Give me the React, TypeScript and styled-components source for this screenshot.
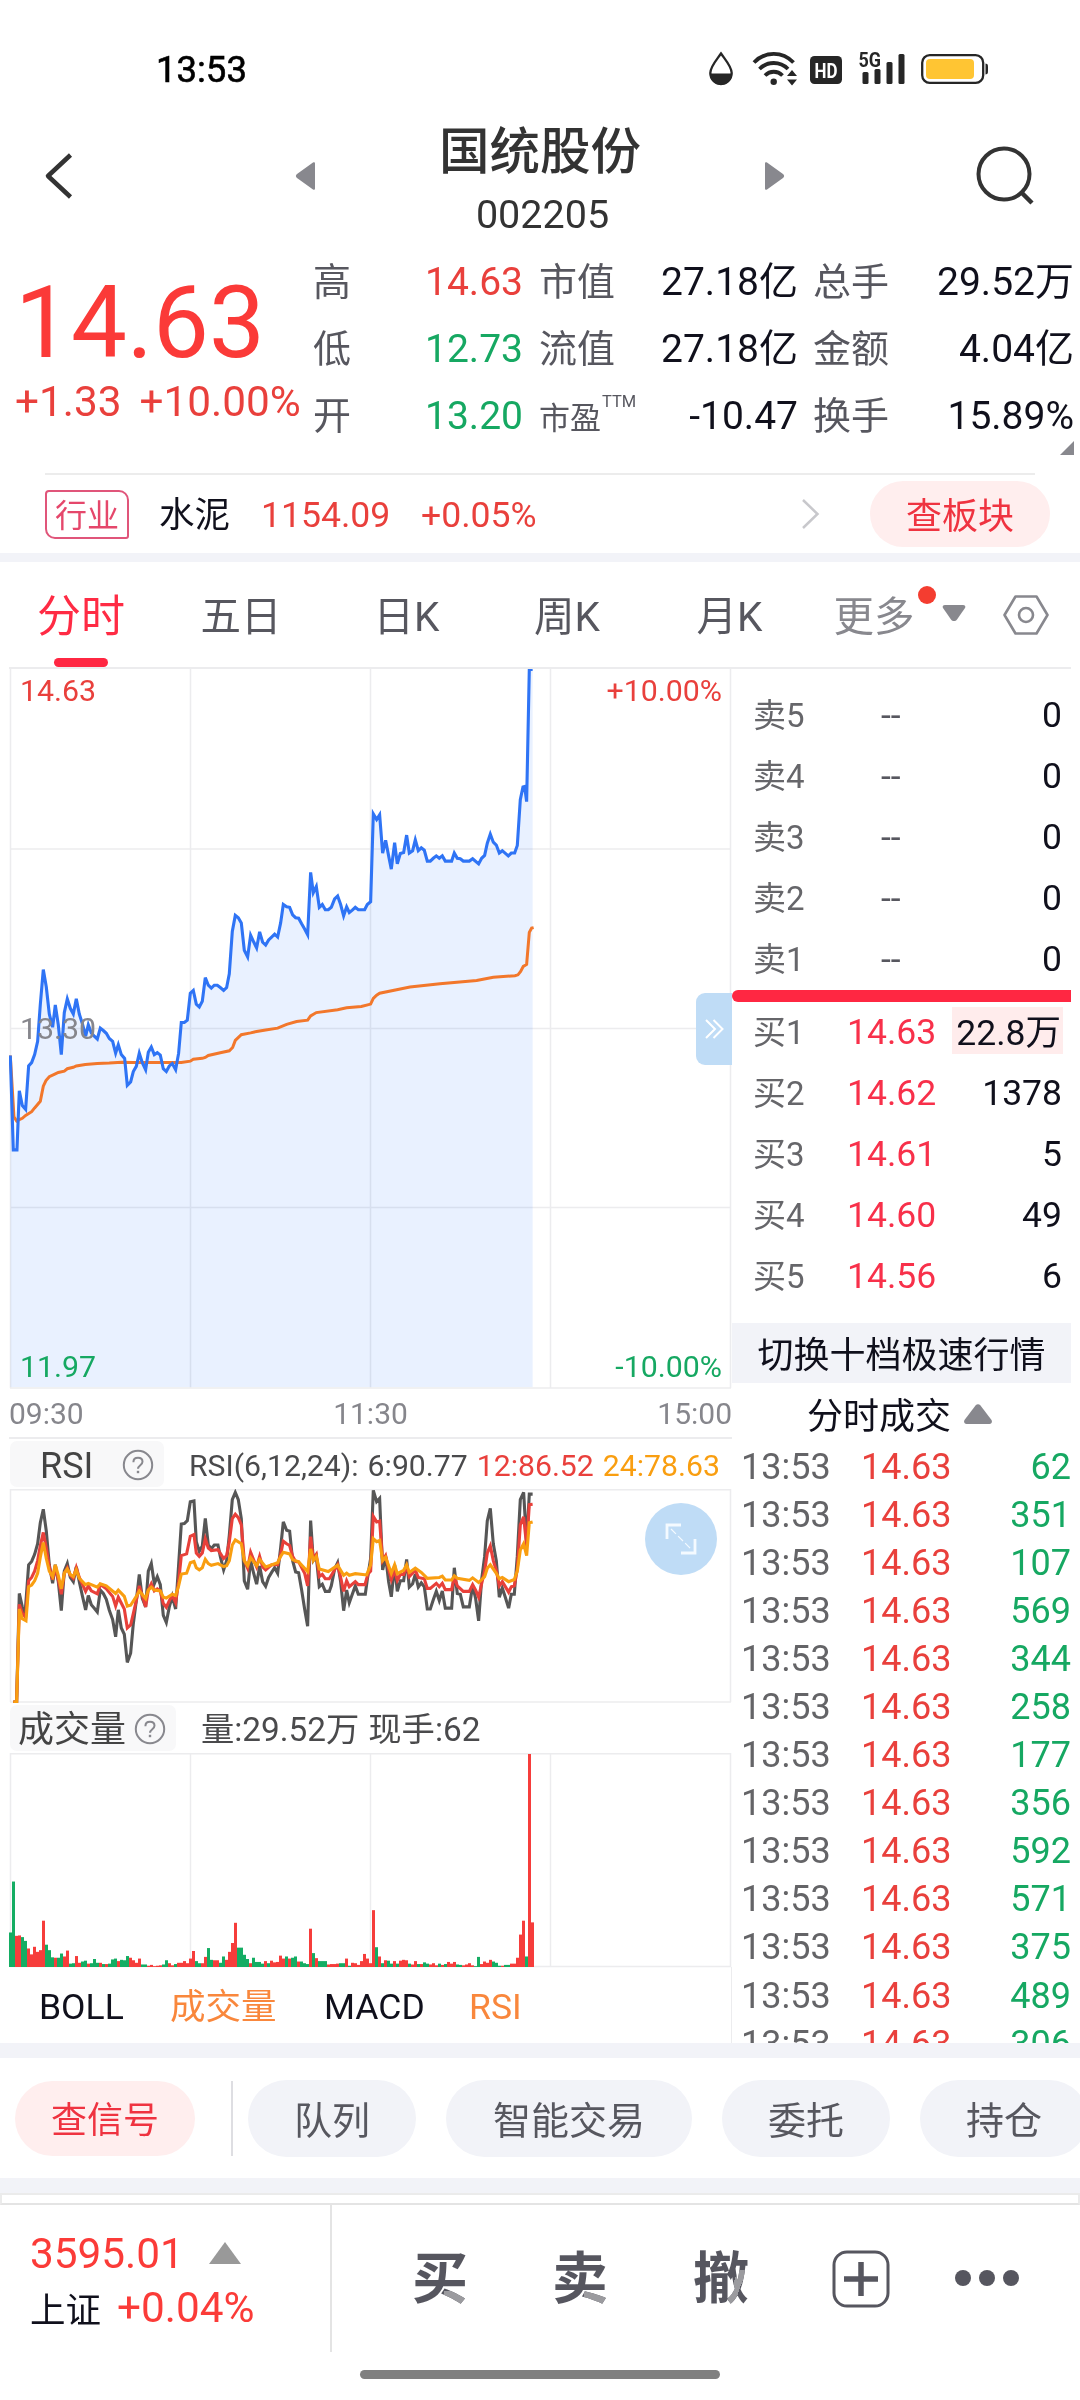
import React from 'react';
import styled, { createGlobalStyle, css } from 'styled-components';

const RED = '#e9403c';
const GREEN = '#16a862';
const INK = '#10101c';
const MUTED = '#57575f';
const GRID = '#ececee';
const BAND = '#f2f3f8';

const GlobalStyle = createGlobalStyle`
  * { box-sizing: border-box; }
  body {
    margin: 0;
    background: #fff;
    font-family: Roboto, 'Noto Sans CJK SC', sans-serif;
  }
  svg { display: block; flex: none; }
`;

const Screen = styled.main`
  width: 1080px;
  height: 2400px;
  overflow: hidden;
  background: #fff;
  color: ${INK};
  display: flex;
  flex-direction: column;
`;

/* ---------- status bar ---------- */

const StatusBar = styled.div`
  height: 100px;
  flex: none;
  display: flex;
  justify-content: space-between;
  padding: 40px 90px 0 156px;
`;

const Clock = styled.div`
  height: 60px;
  font-size: 36.5px;
  line-height: 60px;
  color: #000;
  -webkit-text-stroke: 0.6px #000;
`;

/* ---------- header ---------- */

const Header = styled.header`
  height: 152px;
  flex: none;
  display: grid;
  grid-template-columns: 280px 526px 274px;
`;

const HeaderSide = styled.div<{ $right?: boolean }>`
  display: flex;
  align-items: flex-start;
  justify-content: ${(p) => (p.$right ? 'flex-end' : 'flex-start')};
  padding: ${(p) => (p.$right ? '46px 45px 0 0' : '50px 0 0 42px')};
`;

const Switcher = styled.div`
  display: flex;
  justify-content: space-between;
  padding: 0 21px 0 15px;
`;

const SwitchArrow = styled.svg`
  margin-top: 61px;
`;

const TitleBlock = styled.div`
  display: flex;
  flex-direction: column;
  align-items: center;
`;

const StockName = styled.h1`
  margin: 22px 0 0;
  font-size: 50.5px;
  font-weight: 500;
  line-height: 60px;
  color: #333;
`;

const StockCode = styled.div`
  margin-top: 11px;
  padding-left: 5px;
  font-size: 39.5px;
  line-height: 44px;
  color: #333;
`;

/* ---------- quote ---------- */

const Quote = styled.section`
  height: 221px;
  flex: none;
  display: grid;
  grid-template-columns: 313px 226px 274px 267px;
`;

const PriceBlock = styled.div`
  padding: 19px 0 0 15px;
  color: #fb3a38;
`;

const BigPrice = styled.div`
  font-size: 99.5px;
  line-height: 104px;
  height: 104px;
`;

const Change = styled.div`
  display: flex;
  gap: 18px;
  margin-top: 2px;
  font-size: 42.3px;
  line-height: 50px;
  color: ${RED};
  white-space: nowrap;
`;

const StatColumn = styled.div<{ $end: number }>`
  display: flex;
  flex-direction: column;
  padding-right: ${(p) => p.$end}px;
`;

const Stat = styled.div`
  height: 67px;
  display: flex;
  justify-content: space-between;
  font-size: 39px;
  line-height: 60px;
  white-space: nowrap;
`;

const StatLabel = styled.span<{ $small?: boolean }>`
  display: flex;
  font-size: ${(p) => (p.$small ? 31 : 38)}px;
  line-height: ${(p) => (p.$small ? 65 : 60)}px;
  color: ${MUTED};
`;

const Sup = styled.sup`
  font-size: 16.5px;
  line-height: 16px;
  margin: 8px 0 0 1px;
`;

const StatValue = styled.span<{ $color?: string }>`
  color: ${(p) => p.$color ?? INK};
`;

const Corner = styled.svg`
  align-self: flex-end;
  margin-top: -12px;
`;

/* ---------- industry row ---------- */

const Industry = styled.section`
  height: 80px;
  flex: none;
  margin: 0 30px 0 45px;
  display: flex;
  align-items: center;
  position: relative;
  padding-top: 2px;
  &::before {
    content: '';
    position: absolute;
    top: 0;
    left: 0;
    right: 15px;
    height: 2px;
    background: #ececec;
  }
`;

const IndustryTag = styled.span`
  width: 84px;
  height: 49px;
  margin-top: 1px;
  border: 2px solid #e0557a;
  border-radius: 4px 10px 3px 10px;
  color: #e5476b;
  font-size: 32px;
  line-height: 48px;
  text-align: center;
`;

const IndustryName = styled.span`
  margin-left: 30px;
  width: 102px;
  font-size: 35.5px;
  line-height: 44px;
  padding-top: 2px;
`;

const IndustryFigure = styled.span<{ $width: number }>`
  width: ${(p) => p.$width}px;
  font-size: 35.6px;
  line-height: 44px;
  padding-top: 2px;
  color: ${RED};
`;

const Pill = styled.button<{ $w: number; $h: number; $hot?: boolean; $size?: number }>`
  flex: none;
  width: ${(p) => p.$w}px;
  height: ${(p) => p.$h}px;
  padding: 0;
  border: 0;
  border-radius: 40px;
  font-family: inherit;
  font-size: ${(p) => p.$size ?? 36}px;
  line-height: ${(p) => p.$h}px;
  padding-top: 3px;
  background: ${(p) => (p.$hot ? '#ffeeee' : BAND)};
  color: ${(p) => (p.$hot ? '#ef3340' : MUTED)};
`;

const Band = styled.div<{ $h: number }>`
  flex: none;
  height: ${(p) => p.$h}px;
  background: ${BAND};
`;

/* ---------- period tabs ---------- */

const Tabs = styled.nav`
  height: 105px;
  flex: none;
  display: flex;
  padding-top: 24px;
  position: relative;
`;

const Tab = styled.div<{ $w: number; $active?: boolean; $soft?: boolean }>`
  width: ${(p) => p.$w}px;
  height: 81px;
  flex: none;
  display: flex;
  flex-direction: column;
  align-items: center;
  font-size: 40.5px;
  line-height: 63px;
  white-space: nowrap;
  color: ${(p) => (p.$soft ? '#88888e' : MUTED)};
  ${(p) =>
    p.$active &&
    css`
      color: #ff2b44;
      font-size: 44px;
      &::after {
        content: '';
        width: 54px;
        height: 9px;
        margin-top: 9px;
        border-radius: 5px;
        background: #ff2742;
      }
    `}
`;

const Dot = styled.i`
  position: absolute;
  left: 918px;
  top: 24px;
  width: 18px;
  height: 18px;
  border-radius: 50%;
  background: #f43d30;
`;

/* ---------- main split ---------- */

const Split = styled.section`
  height: 1376px;
  flex: none;
  margin: 0 9px;
  display: grid;
  grid-template-columns: 723px 339px;
  border-top: 2px solid ${GRID};
`;

const ChartColumn = styled.div`
  display: flex;
  flex-direction: column;
  position: relative;
`;

const ChartFrame = styled.div<{ $h: number }>`
  position: relative;
  height: ${(p) => p.$h}px;
  flex: none;
`;

const AxisLabel = styled.span<{ $top: number; $right?: boolean; $color: string }>`
  position: absolute;
  top: ${(p) => p.$top}px;
  ${(p) => (p.$right ? 'right: 10px;' : 'left: 11px;')}
  font-size: 30.3px;
  line-height: 36px;
  color: ${(p) => p.$color};
`;

const TimeAxis = styled.div`
  height: 50px;
  flex: none;
  display: flex;
  justify-content: space-between;
  font-size: 30px;
  line-height: 49px;
  color: #86868c;
  border-bottom: 2px solid ${GRID};
`;

const IndicatorBar = styled.div<{ $h: number }>`
  height: ${(p) => p.$h}px;
  flex: none;
  display: flex;
  align-items: center;
`;

const IndicatorButton = styled.div<{ $w: number; $pad: number; $gap: number }>`
  width: ${(p) => p.$w}px;
  height: 46px;
  flex: none;
  margin-left: 1px;
  padding-left: ${(p) => p.$pad}px;
  display: flex;
  align-items: center;
  gap: ${(p) => p.$gap}px;
  border-radius: 7px;
  background: #f8f8f9;
  font-size: 36px;
  line-height: 42px;
  padding-top: 4px;
  color: #444;
  svg {
    margin-top: -3px;
  }
`;

const Readout = styled.div<{ $left: number; $size: number; $gap: number }>`
  display: flex;
  gap: ${(p) => p.$gap}px;
  margin-left: ${(p) => p.$left}px;
  padding-top: 3px;
  font-size: ${(p) => p.$size}px;
  line-height: 46px;
  color: #4a4a4c;
  white-space: nowrap;
`;

const Tint = styled.span<{ $color: string }>`
  color: ${(p) => p.$color};
`;

const Collapse = styled.div`
  position: absolute;
  right: 0;
  top: 324px;
  width: 36px;
  height: 72px;
  border-radius: 9px 0 0 9px;
  background: #bfdcf6;
  display: flex;
  align-items: center;
  justify-content: center;
`;

const Expand = styled.div`
  position: absolute;
  left: 636px;
  top: 14px;
  width: 72px;
  height: 72px;
  border-radius: 50%;
  background: #bfdcf6;
  display: flex;
  align-items: center;
  justify-content: center;
`;

const IndicatorTabs = styled.div`
  height: 76px;
  flex: none;
  display: flex;
  align-items: center;
  padding: 4px 0 0 30px;
  border-right: 1px solid ${GRID};
`;

const IndicatorTab = styled.span<{ $w: number; $on?: boolean }>`
  width: ${(p) => p.$w}px;
  font-size: 35.5px;
  line-height: 44px;
  color: ${(p) => (p.$on ? '#f9873c' : INK)};
`;

/* ---------- order book and trades ---------- */

const BookColumn = styled.div`
  display: flex;
  flex-direction: column;
  overflow: hidden;
`;

const Level = styled.div`
  height: 61px;
  flex: none;
  display: grid;
  grid-template-columns: 94px 95px 1fr;
  padding: 0 9px 0 21px;
  font-size: 35.5px;
  line-height: 61px;
  white-space: nowrap;
`;

const LevelLabel = styled.span`
  font-size: 33px;
  color: #66666a;
`;

const LevelPrice = styled.span<{ $empty?: boolean }>`
  color: ${(p) => (p.$empty ? MUTED : '#f8304a')};
  padding-left: ${(p) => (p.$empty ? 34 : 0)}px;
`;

const LevelVolume = styled.span<{ $bar?: boolean }>`
  justify-self: end;
  ${(p) =>
    p.$bar &&
    css`
      height: 47px;
      margin: 5px -1px 0 0;
      padding: 0 2px 0 4px;
      line-height: 52px;
      background: #ffecec;
    `}
`;

const Sells = styled.div`
  padding-top: 16px;
  height: 321px;
  flex: none;
`;

const Balance = styled.div`
  height: 12px;
  flex: none;
  border-radius: 6px 0 0 6px;
  background: #ff2742;
`;

const Buys = styled.div`
  height: 321px;
  flex: none;
`;

const DepthSwitch = styled.div`
  height: 60px;
  flex: none;
  background: ${BAND};
  font-size: 36px;
  line-height: 66px;
  text-align: center;
`;

const TradesTitle = styled.div`
  height: 59px;
  flex: none;
  display: flex;
  align-items: center;
  gap: 13px;
  padding: 1px 0 0 75px;
  font-size: 36px;
  svg {
    margin-top: 2px;
  }
`;

const Trade = styled.div`
  height: 48.05px;
  flex: none;
  display: grid;
  grid-template-columns: 120px 120px 1fr;
  padding-left: 9px;
  font-size: 36px;
  line-height: 50px;
  color: #646467;
`;

const TradePrice = styled.span`
  color: ${RED};
`;

const TradeSize = styled.span`
  color: ${GREEN};
  text-align: right;
`;

/* ---------- shortcuts ---------- */

const Shortcuts = styled.section`
  height: 120px;
  flex: none;
  display: flex;
  align-items: center;
  padding-left: 15px;
  overflow: hidden;
`;

const Rule = styled.i<{ $h: number; $left: number; $right: number }>`
  flex: none;
  width: 2px;
  height: ${(p) => p.$h}px;
  margin: 0 ${(p) => p.$right}px 0 ${(p) => p.$left}px;
  background: #dedee2;
`;

const PillRow = styled.div`
  display: flex;
  gap: 30px;
`;

const Drawer = styled.div`
  height: 12px;
  flex: none;
  border: 2px solid #ebebeb;
  border-bottom-color: #e4e4e4;
`;

/* ---------- bottom bar ---------- */

const BottomBar = styled.footer`
  height: 147px;
  flex: none;
  display: flex;
`;

const IndexBox = styled.div`
  width: 332px;
  flex: none;
  border-right: 2px solid #e4e4e4;
  padding: 22px 0 0 30px;
`;

const IndexLine = styled.div<{ $gap: number }>`
  display: flex;
  align-items: center;
  gap: ${(p) => p.$gap}px;
  height: 54px;
  font-size: 42.3px;
  line-height: 54px;
  color: #fb3b38;
  svg {
    margin-top: -3px;
  }
`;

const IndexName = styled.span`
  font-size: 35.5px;
  padding-top: 5px;
  color: ${INK};
`;

const Actions = styled.div`
  flex: 1;
  display: grid;
  grid-template-columns: 217px 140px 142px 138px 111px;
  height: 147px;
`;

const Action = styled.div<{ $left: number }>`
  padding-left: ${(p) => p.$left}px;
  display: flex;
  align-items: center;
`;

const TradeGlyph = styled.span<{ $accent: string }>`
  width: 56px;
  height: 70px;
  font-size: 56px;
  font-weight: 700;
  line-height: 70px;
  color: transparent;
  background: ${(p) => p.$accent}, #56565f;
  background-clip: text;
  -webkit-background-clip: text;
`;

const HomeArea = styled.div`
  flex: 1;
  display: flex;
  justify-content: center;
  padding-top: 18px;
`;

const HomeHandle = styled.i`
  width: 360px;
  height: 9px;
  border-radius: 5px;
  background: #808080;
`;

/* ---------- series: one sample per minute, 9 units apart ---------- */

const PRICE =
  '31,838 40,1038 51,1038 58,913 67,944 77,952 86,860 95,853 104,836 113,808 121,730 130,656 139,693 148,750 158,778 166,731 175,773 184,836 193,747 202,718 211,738 220,750 229,718 238,750 247,770 257,797 265,773 274,790 283,797 292,803 301,780 310,785 319,791 328,802 338,808 347,833 355,815 364,836 374,844 382,901 392,894 400,872 409,861 418,833 427,853 437,868 445,831 454,820 463,836 472,832 481,837 490,866 499,872 508,860 517,855 527,868 536,833 544,768 553,768 562,763 571,706 580,700 589,729 598,735 607,723 616,673 625,689 634,695 643,689 652,689 661,694 671,700 680,694 688,665 697,575 706,541 715,546 724,557 733,615 743,629 752,583 761,597 770,610 779,576 788,598 797,604 806,593 815,587 824,581 833,587 842,557 850,518 860,523 869,524 878,540 887,546 896,547 905,559 914,570 923,582 932,450 940,493 949,480 958,524 967,518 976,529 985,529 994,524 1004,506 1013,500 1022,518 1031,542 1040,523 1048,535 1057,530 1066,524 1075,529 1094,529 1102,518 1112,512 1120,326 1130,338 1139,328 1148,409 1157,382 1166,415 1174,443 1184,387 1192,432 1201,410 1211,408 1220,371 1228,409 1238,404 1246,381 1255,404 1264,398 1273,403 1282,426 1291,426 1300,420 1309,415 1318,420 1327,415 1336,426 1355,426 1363,409 1372,420 1381,421 1390,426 1408,426 1418,421 1436,432 1445,420 1454,414 1462,388 1471,369 1480,386 1489,392 1498,409 1507,404 1525,415 1534,409 1544,409 1552,393 1561,296 1569,269 1574,268 1580,300 1588,20 1598,20';

const AVERAGE =
  '31,838 42,968 50,977 58,974 67,971 77,965 95,957 104,949 121,935 130,903 138,891 148,883 166,877 175,874 193,871 202,866 220,863 229,860 256,857 292,855 328,854 365,852 400,853 544,853 571,850 580,846 607,844 616,842 625,838 661,832 688,828 698,821 706,806 724,794 752,790 770,787 797,784 833,780 860,772 890,766 923,763 932,754 949,747 1013,741 1040,737 1084,734 1112,729 1120,717 1130,710 1139,706 1230,693 1320,686 1430,679 1480,672 1545,669 1554,667 1562,660 1570,649 1580,645 1588,577 1595,568 1601,567';

const RSI6 =
  '40,766 50,766 58,508 67,540 75,560 86,440 95,432 104,415 113,390 121,340 130,308 139,360 148,440 158,484 166,440 175,480 184,549 193,455 202,437 211,470 220,480 229,445 238,480 247,513 257,547 265,513 274,535 283,543 292,552 301,500 310,508 319,522 328,548 338,570 347,611 355,547 364,590 373,605 382,672 392,650 400,580 409,525 418,463 427,520 437,540 445,455 454,437 463,485 472,468 481,487 490,560 499,577 508,540 517,515 527,545 536,440 544,343 553,342 562,335 571,290 582,288 589,385 598,408 607,395 616,330 625,393 634,402 643,393 654,393 661,420 671,452 680,430 688,370 697,285 706,268 715,285 724,330 733,478 743,498 752,430 761,460 770,486 779,443 788,480 797,491 806,470 815,458 824,447 833,460 842,400 850,338 860,358 869,360 878,430 887,457 896,459 905,500 914,545 923,586 932,335 940,430 949,420 958,492 967,486 976,503 988,503 994,490 1004,450 1013,435 1022,480 1031,549 1040,500 1048,530 1057,510 1066,490 1075,510 1096,510 1102,475 1112,425 1120,263 1130,290 1139,282 1148,452 1157,420 1166,480 1174,516 1184,440 1192,503 1201,478 1211,478 1220,427 1228,493 1238,485 1246,462 1255,493 1264,483 1273,492 1282,545 1291,545 1300,523 1309,503 1318,525 1327,502 1336,543 1355,543 1363,447 1372,508 1381,510 1390,540 1408,540 1418,490 1427,520 1436,573 1445,475 1454,420 1462,335 1471,306 1480,390 1489,430 1498,517 1507,495 1516,517 1526,543 1534,510 1543,510 1552,420 1561,285 1571,268 1580,390 1588,272 1598,272';

const RSI12 =
  '40,766 50,766 58,534 67,555 77,565 86,478 95,470 104,455 113,430 121,395 130,363 139,400 148,445 158,475 166,445 175,475 184,510 193,460 202,447 211,465 220,472 229,447 238,470 257,503 265,490 274,502 292,509 301,487 319,497 338,515 347,538 355,517 373,545 382,590 392,583 400,556 409,525 418,490 437,540 445,500 454,485 463,502 472,497 481,502 490,532 499,541 508,525 517,513 527,530 536,480 544,418 560,414 571,372 582,368 589,412 598,420 607,412 616,378 625,400 634,406 654,404 671,425 680,418 688,385 697,330 706,320 715,328 724,345 733,430 743,448 752,410 761,428 770,445 779,420 788,445 797,452 815,440 833,440 842,415 850,384 860,390 869,394 878,420 887,432 896,433 914,460 923,490 932,373 940,425 949,415 958,468 967,463 976,473 988,473 1013,440 1022,470 1031,503 1040,478 1048,492 1066,480 1075,487 1095,487 1104,462 1112,455 1120,325 1130,338 1139,336 1148,430 1157,418 1166,450 1174,475 1184,452 1192,477 1201,463 1211,463 1220,443 1228,468 1246,453 1255,470 1273,473 1282,496 1291,496 1309,484 1318,492 1327,484 1336,499 1355,499 1363,467 1372,490 1390,503 1408,503 1418,487 1427,500 1436,517 1445,485 1454,455 1462,412 1471,395 1480,430 1489,453 1498,490 1507,480 1526,505 1534,492 1543,490 1552,450 1561,345 1571,326 1580,395 1588,297 1598,296';

const RSI24 =
  '40,766 50,766 58,545 67,568 78,573 86,492 95,488 104,478 113,460 121,422 130,387 139,425 148,455 158,468 166,440 175,465 184,497 193,460 202,450 211,463 220,468 229,452 238,472 256,487 265,484 292,493 301,485 319,490 347,508 355,500 373,515 382,538 392,536 409,515 418,502 437,520 445,500 454,493 463,500 481,502 490,517 499,519 517,510 527,513 536,490 544,462 560,460 571,435 582,432 589,447 598,452 607,447 616,427 625,437 634,441 654,437 671,444 680,442 688,430 697,393 706,381 724,390 733,430 743,442 752,423 770,442 779,427 797,445 833,435 842,420 850,410 869,414 878,428 896,433 923,456 932,402 940,430 949,420 958,450 985,456 1013,441 1031,465 1040,460 1048,465 1066,461 1100,464 1112,440 1120,378 1130,385 1139,382 1148,430 1157,422 1174,460 1184,440 1192,461 1211,453 1220,440 1228,458 1246,448 1264,458 1282,472 1318,470 1327,467 1336,476 1355,476 1363,466 1372,472 1408,477 1418,471 1436,482 1445,475 1454,468 1462,448 1471,440 1489,460 1498,473 1507,470 1526,480 1543,475 1552,455 1561,405 1571,390 1580,418 1588,340 1598,338';

const VOLUME =
  '82g 203g 74r 75r 71g 62g 44r 30r 48r 36r 40r 110r 53g 40g 23g 22r 22g 32g 25r 39r 8g 9g 26r 10r 13g 15g 8r 9g 19g 10g 10r 7g 7r 8g 18g 20g 14r 17g 16g 26g 22r 16r 10r 20r 6g 6g 3r 5r 2r 3r 4r 6g 16g 9r 4r 7g 10r 10r 14r 9r 20r 38r 14g 9g 9r 24r 45g 17g 16r 16r 10g 25g 17r 36r 57r 105r 46g 46g 29g 19g 9r 22g 12g 12g 8g 14r 9g 15r 11r 12r 27r 20r 25g 20r 22g 25g 13r 13g 9g 7g 91r 33g 21r 14g 14g 14g 6r 7r 7r 8r 9g 9g 20r 3g 10r 9r 5r 14r 31r 20r 9r 135r 47g 25r 9g 16r 15g 8g 14r 8g 15r 17r 16r 8g 6r 14r 7g 7r 11g 8g 6r 9r 4r 8g 5r 7g 12r 8r 12r 6g 5g 4r 6r 9r 4r 2g 24g 7r 13r 10r 17r 13g 10g 3g 3r 5g 5g 8r 8r 22r 77r 110r 25g 506r 106r'
    .split(' ')
    .map((v) => ({ size: parseInt(v, 10), up: v.endsWith('r') }));

const Line = ({ points, color, width = 2.6 }: { points: string; color: string; width?: number }) => (
  <polyline
    points={points}
    fill="none"
    stroke={color}
    strokeWidth={width}
    strokeLinejoin="miter"
    vectorEffect="non-scaling-stroke"
  />
);

const Grid = ({ h, rows = [], cols = [] }: { h: number; rows?: number[]; cols?: number[] }) => (
  <g stroke={GRID} strokeWidth={1.5} fill="none">
    <path d={`M1.5 0V${h}M721.5 0V${h}`} />
    {cols.map((x) => (
      <path key={x} d={`M${x} 0V${h}`} />
    ))}
    {rows.map((y) => (
      <path key={y} d={`M1 ${y}H722`} />
    ))}
  </g>
);

const PriceChart = () => (
  <svg width={723} height={720}>
    <svg x={1.3} y={0} width={720} height={718.3} viewBox="31 19 2160 1522" preserveAspectRatio="none">
      <polygon points={`31,1541 ${PRICE} 1598,1541`} fill="#e9f1ff" />
    </svg>
    <g style={{ mixBlendMode: 'multiply' }}>
      <Grid h={719} rows={[180, 359.5, 538.5, 719]} cols={[181.5, 361.5, 541.5]} />
    </g>
    <svg x={1.3} y={0} width={720} height={718.3} viewBox="31 19 2160 1522" preserveAspectRatio="none" overflow="visible">
      <Line points={AVERAGE} color="#f2772b" width={3} />
      <Line points={PRICE} color="#2f74f5" width={3.1} />
    </svg>
  </svg>
);

const RsiChart = () => (
  <svg width={723} height={214}>
    <Grid h={213} rows={[0.8, 213]} />
    <svg x={1.3} y={0.5} width={720} height={212.5} viewBox="31 261 2160 505" preserveAspectRatio="none" overflow="visible">
      <Line points={RSI6} color="#565656" width={3.1} />
      <Line points={RSI12} color="#e8403a" width={3.1} />
      <Line points={RSI24} color="#f99e10" width={3.1} />
    </svg>
  </svg>
);

const VolumeChart = () => (
  <svg width={723} height={215}>
    <Grid h={214} rows={[0.8, 213.5]} cols={[181.5, 361.5, 541.5]} />
    {VOLUME.map((v, i) => {
      const h = (v.size * 213) / 506;
      return (
        <rect key={i} x={i * 3} y={214 - h} width={3} height={h} fill={v.up ? '#f63d3b' : '#14ad63'} />
      );
    })}
  </svg>
);

const Help = () => (
  <svg width="32" height="32" viewBox="0 0 32 32" fill="none" stroke="#88888e" strokeWidth="2">
    <circle cx="16" cy="16" r="14.2" />
    <path d="M11.4 13.2c0-2.8 2-4.4 4.6-4.4s4.5 1.5 4.5 4c0 3.300-4.500 3.500-4.500 7" />
    <path d="M16 21.800v2.400" strokeWidth="2.400" />
  </svg>
);

const StatusIcons = () => (
  <svg width="300" height="60" viewBox="690 40 300 60" fill="#262626">
    <path d="M721 53.500c4 6 10.700 13 10.700 19.500a10.700 11 0 0 1-21.400 0c0-6.500 6.700-13.500 10.700-19.500z" fill="none" stroke="#262626" strokeWidth="2.300" />
    <path d="M710 73.500h22c0 7-5 11.500-11 11.500s-11-4.500-11-11.500z" />
    <g fill="none" stroke="#262626" strokeWidth="3.800">
      <path d="M754 62.500c11-11.500 28.500-11.500 39.500 0" />
      <path d="M759.500 69c8-8 20.500-8 28.500 0" />
      <path d="M765 75.500c5-5 12.500-5 17.500 0" />
    </g>
    <circle cx="773.700" cy="81.800" r="3.200" />
    <path d="M787 76l5-6 5 6zM787 79.500l5 6 5-6z" />
    <rect x="810" y="56" width="32" height="28" rx="4.500" />
    <text x="826" y="77.500" textAnchor="middle" fontFamily="Roboto" fontWeight="700" fontSize="21" fill="#fff" textLength="23" lengthAdjust="spacingAndGlyphs">HD</text>
    <text x="858.500" y="67" fontFamily="Roboto" fontWeight="700" fontSize="20.500" textLength="22.500" lengthAdjust="spacingAndGlyphs">5G</text>
    <rect x="862.500" y="72" width="6" height="12" rx="1.500" />
    <rect x="874.500" y="69" width="6" height="15" rx="1.500" />
    <rect x="886.500" y="62" width="6" height="22" rx="1.500" />
    <rect x="898.500" y="54" width="6" height="30" rx="1.500" />
    <rect x="922.200" y="55.200" width="61" height="27.600" rx="7.500" fill="none" stroke="#262626" strokeWidth="2.300" />
    <rect x="926" y="59" width="48" height="20" rx="4" fill="#ffc533" />
    <path d="M985.500 63.500c2.500.3 2.500 1.500 2.500 5.500s0 5.200-2.500 5.500z" />
  </svg>
);

type StatItem = { label: string; value: string; color?: string; ttm?: boolean };

const STATS: { end: number; items: StatItem[] }[] = [
  {
    end: 16,
    items: [
      { label: '高', value: '14.63', color: RED },
      { label: '低', value: '12.73', color: GREEN },
      { label: '开', value: '13.20', color: GREEN },
    ],
  },
  {
    end: 15,
    items: [
      { label: '市值', value: '27.18亿' },
      { label: '流值', value: '27.18亿' },
      { label: '市盈', value: '-10.47', ttm: true },
    ],
  },
  {
    end: 6,
    items: [
      { label: '总手', value: '29.52万' },
      { label: '金额', value: '4.04亿' },
      { label: '换手', value: '15.89%' },
    ],
  },
];

const SELLS = ['卖5', '卖4', '卖3', '卖2', '卖1'];
const BUYS: [string, string, string][] = [
  ['买1', '14.63', '22.8万'],
  ['买2', '14.62', '1378'],
  ['买3', '14.61', '5'],
  ['买4', '14.60', '49'],
  ['买5', '14.56', '6'],
];
const TRADES = [62, 351, 107, 569, 344, 258, 177, 356, 592, 571, 375, 489, 306];
const SHORTCUTS: [string, number][] = [
  ['队列', 168],
  ['智能交易', 246],
  ['委托', 168],
  ['持仓', 168],
];

const ACCENT_FOOT = 'linear-gradient(#9b9b9f, #9b9b9f) 32px 47px / 24px 23px no-repeat';
const ACCENT_SLASH =
  'linear-gradient(110deg, transparent 38%, #9b9b9f 38%, #9b9b9f 62%, transparent 62%) 32px 26px / 20px 40px no-repeat';

export default function App() {
  return (
    <>
      <GlobalStyle />
      <Screen>
        <StatusBar>
          <Clock>13:53</Clock>
          <StatusIcons />
        </StatusBar>

        <Header>
          <HeaderSide>
            <svg width="34" height="52" viewBox="0 0 34 52" fill="none" stroke="#333" strokeWidth="4.500">
              <path d="M28.500 5L6 26l22.500 21" strokeLinejoin="round" />
            </svg>
          </HeaderSide>
          <Switcher>
            <SwitchArrow width="20" height="30" viewBox="0 0 20 30" fill="#88888e">
              <path d="M18 1.500c1-.7 2-.3 2 1v25c0 1.300-1 1.700-2 1L2 17c-1.500-1-1.500-3 0-4z" />
            </SwitchArrow>
            <TitleBlock>
              <StockName>国统股份</StockName>
              <StockCode>002205</StockCode>
            </TitleBlock>
            <SwitchArrow width="20" height="30" viewBox="0 0 20 30" fill="#88888e">
              <path d="M2 1.500c-1-.7-2-.3-2 1v25c0 1.300 1 1.700 2 1L18 17c1.500-1 1.500-3 0-4z" />
            </SwitchArrow>
          </Switcher>
          <HeaderSide $right>
            <svg width="60" height="60" viewBox="0 0 60 60" fill="none" stroke="#333" strokeWidth="4">
              <circle cx="29" cy="28" r="25.500" />
              <path d="M46 46l11 11" strokeWidth="4.500" />
            </svg>
          </HeaderSide>
        </Header>

        <Quote>
          <PriceBlock>
            <BigPrice>14.63</BigPrice>
            <Change>
              <span>+1.33</span>
              <span>+10.00%</span>
            </Change>
          </PriceBlock>
          {STATS.map((col, i) => (
            <StatColumn key={i} $end={col.end}>
              {col.items.map((s) => (
                <Stat key={s.label}>
                  <StatLabel $small={s.ttm}>
                    {s.label}
                    {s.ttm && <Sup>TTM</Sup>}
                  </StatLabel>
                  <StatValue $color={s.color}>{s.value}</StatValue>
                </Stat>
              ))}
              {i === 2 && (
                <Corner width="14" height="14">
                  <path d="M14 0v14H0z" fill="#88888e" />
                </Corner>
              )}
            </StatColumn>
          ))}
        </Quote>

        <Industry>
          <IndustryTag>行业</IndustryTag>
          <IndustryName>水泥</IndustryName>
          <IndustryFigure $width={160}>1154.09</IndustryFigure>
          <IndustryFigure $width={380}>+0.05%</IndustryFigure>
          <svg width="20" height="32" viewBox="0 0 20 32" fill="none" stroke="#c8c8cc" strokeWidth="2.500">
            <path d="M2 2l14.500 14L2 30" />
          </svg>
          <div style={{ flex: 1 }} />
          <Pill $w={180} $h={66} $hot>
            查板块
          </Pill>
        </Industry>
        <Band $h={9} />

        <Tabs>
          <Tab $w={162} $active>
            分时
          </Tab>
          <Tab $w={158}>五日</Tab>
          <Tab $w={173}>日K</Tab>
          <Tab $w={148}>周K</Tab>
          <Tab $w={177}>月K</Tab>
          <Tab $w={112} $soft>
            更多
          </Tab>
          <Dot />
          <svg width="150" height="60" viewBox="930 586 150 60">
            <path d="M945 605h18c2 0 3 1.500 2 3l-8 11.500c-1.500 2-4.500 2-6 0L943 608c-1-1.500 0-3 2-3z" fill="#88888e" />
            <g fill="none" stroke="#88888e" strokeWidth="2.600">
              <path d="M1015.500 596.500h21l11 18.500-11 18.500h-21l-11-18.500z" strokeLinejoin="round" />
              <circle cx="1026" cy="615" r="7" />
            </g>
          </svg>
        </Tabs>

        <Split>
          <ChartColumn>
            <ChartFrame $h={720}>
              <PriceChart />
              <AxisLabel $top={4} $color={RED}>14.63</AxisLabel>
              <AxisLabel $top={4} $right $color={RED}>+10.00%</AxisLabel>
              <AxisLabel $top={342} $color="#86868c">13.30</AxisLabel>
              <AxisLabel $top={680} $color={GREEN}>11.97</AxisLabel>
              <AxisLabel $top={680} $right $color={GREEN}>-10.00%</AxisLabel>
              <Collapse>
                <svg width="20" height="22" viewBox="0 0 20 22" fill="none" stroke="#fff" strokeWidth="2">
                  <path d="M2 2l9 9-9 9M9.500 2l9 9-9 9" />
                </svg>
              </Collapse>
            </ChartFrame>
            <TimeAxis>
              <span>09:30</span>
              <span>11:30</span>
              <span>15:00</span>
            </TimeAxis>
            <IndicatorBar $h={50}>
              <IndicatorButton $w={154} $pad={30} $gap={29}>
                RSI
                <Help />
              </IndicatorButton>
              <Readout $left={25} $size={30.2} $gap={9}>
                <span>RSI(6,12,24):</span>
                <span>6:90.77</span>
                <Tint $color={RED}>12:86.52</Tint>
                <Tint $color="#f99e10">24:78.63</Tint>
              </Readout>
            </IndicatorBar>
            <ChartFrame $h={214}>
              <RsiChart />
              <Expand>
                <svg width="36" height="36" viewBox="0 0 36 36" fill="none" stroke="#f4faff" strokeWidth="2.800">
                  <path d="M18 4H4v14M32 18v14H18" />
                  <path d="M8 8l20 20" strokeWidth="1.200" strokeDasharray="7 3" />
                </svg>
              </Expand>
            </ChartFrame>
            <IndicatorBar $h={50}>
              <IndicatorButton $w={166} $pad={8} $gap={8}>
                成交量
                <Help />
              </IndicatorButton>
              <Readout $left={25} $size={33.3} $gap={9}>
                <span>量:29.52万</span>
                <span>现手:62</span>
              </Readout>
            </IndicatorBar>
            <ChartFrame $h={214}>
              <VolumeChart />
            </ChartFrame>
            <IndicatorTabs>
              <IndicatorTab $w={131}>BOLL</IndicatorTab>
              <IndicatorTab $w={154} $on>
                成交量
              </IndicatorTab>
              <IndicatorTab $w={145}>MACD</IndicatorTab>
              <IndicatorTab $w={100} $on>
                RSI
              </IndicatorTab>
            </IndicatorTabs>
          </ChartColumn>

          <BookColumn>
            <Sells>
              {SELLS.map((label) => (
                <Level key={label}>
                  <LevelLabel>{label}</LevelLabel>
                  <LevelPrice $empty>--</LevelPrice>
                  <LevelVolume>0</LevelVolume>
                </Level>
              ))}
            </Sells>
            <Balance />
            <Buys>
              {BUYS.map(([label, price, volume], i) => (
                <Level key={label}>
                  <LevelLabel>{label}</LevelLabel>
                  <LevelPrice>{price}</LevelPrice>
                  <LevelVolume $bar={i === 0}>{volume}</LevelVolume>
                </Level>
              ))}
            </Buys>
            <DepthSwitch>切换十档极速行情</DepthSwitch>
            <TradesTitle>
              分时成交
              <svg width="28" height="20" viewBox="0 0 28 20" fill="#88888e">
                <path d="M11.500 1.500c1.500-1.800 3.500-1.800 5 0L27.500 16c1 2 0 4-2 4h-23c-2 0-3-2-2-4z" />
              </svg>
            </TradesTitle>
            {TRADES.map((size) => (
              <Trade key={size}>
                <span>13:53</span>
                <TradePrice>14.63</TradePrice>
                <TradeSize>{size}</TradeSize>
              </Trade>
            ))}
          </BookColumn>
        </Split>

        <Band $h={15} />
        <Shortcuts>
          <Pill $w={180} $h={75} $hot>
            查信号
          </Pill>
          <Rule $h={75} $left={36} $right={15} />
          <PillRow>
            {SHORTCUTS.map(([label, w]) => (
              <Pill key={label} $w={w} $h={77} $size={38}>
                {label}
              </Pill>
            ))}
          </PillRow>
        </Shortcuts>
        <Band $h={15} />
        <Drawer />

        <BottomBar>
          <IndexBox>
            <IndexLine $gap={25}>
              3595.01
              <svg width="32" height="22" viewBox="0 0 32 22" fill="#999">
                <path d="M16 0l16 22H0z" />
              </svg>
            </IndexLine>
            <IndexLine $gap={16}>
              <IndexName>上证</IndexName>
              +0.04%
            </IndexLine>
          </IndexBox>
          <Actions>
            <Action $left={80}>
              <TradeGlyph $accent={ACCENT_FOOT}>买</TradeGlyph>
            </Action>
            <Action $left={3}>
              <TradeGlyph $accent={ACCENT_FOOT}>卖</TradeGlyph>
            </Action>
            <Action $left={4}>
              <TradeGlyph $accent={ACCENT_SLASH}>撤</TradeGlyph>
            </Action>
            <Action $left={0}>
              <svg width="60" height="60" viewBox="0 0 60 60" fill="none" stroke="#56565f">
                <rect x="3" y="3" width="54" height="54" rx="13" strokeWidth="3" />
                <path d="M30 13v34M13 30h34" strokeWidth="5.500" />
              </svg>
            </Action>
            <Action $left={0}>
              <svg width="66" height="18" viewBox="15 1 66 18" fill="#56565f" overflow="visible">
                <circle cx="9" cy="9" r="8" />
                <circle cx="33" cy="9" r="8" />
                <circle cx="57" cy="9" r="8" />
              </svg>
            </Action>
          </Actions>
        </BottomBar>
        <HomeArea>
          <HomeHandle />
        </HomeArea>
      </Screen>
    </>
  );
}
